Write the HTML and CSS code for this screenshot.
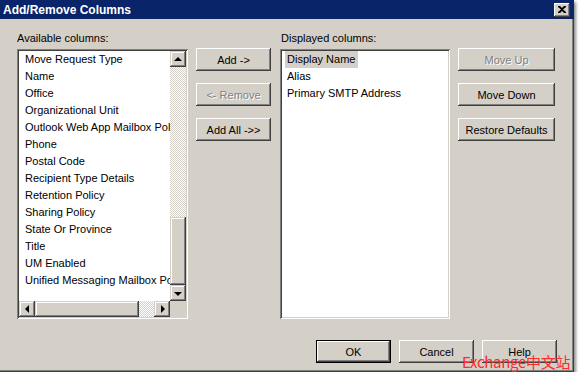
FILE: index.html
```html
<!DOCTYPE html>
<html lang="en">
<head>
    <meta charset="UTF-8">
    <title>Add/Remove Columns</title>
    <link rel="stylesheet" href="styles.css">
</head>
<body>
    <div class="window">
        <div class="titlebar">
            <span class="title">Add/Remove Columns</span>
            <div class="close">
                <svg width="8" height="7" viewBox="0 0 8 7">
                    <path d="M0 0h2l2 2 2-2h2v1L5 3.5 8 6v1H6L4 5 2 7H0V6l3-2.5L0 1z" fill="#000"/>
                </svg>
            </div>
        </div>
        <div class="content">
            <div class="columns">
                <div class="panel left-panel">
                    <div class="label">Available columns:</div>
                    <div class="listbox">
                        <div class="list-main">
                            <ul class="items">
                                <li><span>Move Request Type</span></li>
                                <li><span>Name</span></li>
                                <li><span>Office</span></li>
                                <li><span>Organizational Unit</span></li>
                                <li><span>Outlook Web App Mailbox Policy</span></li>
                                <li><span>Phone</span></li>
                                <li><span>Postal Code</span></li>
                                <li><span>Recipient Type Details</span></li>
                                <li><span>Retention Policy</span></li>
                                <li><span>Sharing Policy</span></li>
                                <li><span>State Or Province</span></li>
                                <li><span>Title</span></li>
                                <li><span>UM Enabled</span></li>
                                <li><span>Unified Messaging Mailbox Policy</span></li>
                            </ul>
                            <div class="vscroll">
                                <div class="sb-btn"><span class="arrow up"></span></div>
                                <div class="track v-track-top"></div>
                                <div class="thumb v-thumb"></div>
                                <div class="sb-btn"><span class="arrow down"></span></div>
                            </div>
                        </div>
                        <div class="hscroll-row">
                            <div class="hscroll">
                                <div class="sb-btn"><span class="arrow left"></span></div>
                                <div class="thumb h-thumb"></div>
                                <div class="track h-track"></div>
                                <div class="sb-btn"><span class="arrow right"></span></div>
                            </div>
                            <div class="corner"></div>
                        </div>
                    </div>
                </div>
                <div class="btn-col mid-col">
                    <button class="btn">Add -&gt;</button>
                    <button class="btn" disabled>&lt;- Remove</button>
                    <button class="btn">Add All -&gt;&gt;</button>
                </div>
                <div class="panel right-panel">
                    <div class="label">Displayed columns:</div>
                    <div class="listbox">
                        <ul class="items">
                            <li class="selected"><span>Display Name</span></li>
                            <li><span>Alias</span></li>
                            <li><span>Primary SMTP Address</span></li>
                        </ul>
                    </div>
                </div>
                <div class="btn-col side-col">
                    <button class="btn" disabled>Move Up</button>
                    <button class="btn">Move Down</button>
                    <button class="btn">Restore Defaults</button>
                </div>
            </div>
            <div class="footer">
                <button class="btn default">OK</button>
                <button class="btn">Cancel</button>
                <button class="btn">Help</button>
            </div>
        </div>
        <div class="watermark">Exchange中文站</div>
    </div>
</body>
</html>
```

FILE: styles.css
```css
body {
    margin: 0;
    background: #fff;
    font-family: "Liberation Sans", Arial, sans-serif;
    font-size: 11px;
    color: #000;
}
.window {
    position: relative;
    width: 574px;
    height: 372px;
    background: #d4d0c8;
    box-shadow: inset -1px -1px #404040, inset -2px -2px #808080, 2px 2px 3px rgba(0, 0, 0, 0.45);
}
.titlebar {
    height: 19px;
    background: #0a246a;
    display: flex;
    align-items: center;
    justify-content: space-between;
    padding: 0 4px 0 3px;
}
.title {
    color: #fff;
    font-weight: bold;
    font-size: 12px;
}
.close {
    width: 16px;
    height: 14px;
    background: #d4d0c8;
    box-shadow: inset -1px -1px #404040, inset 1px 1px #fff, inset -2px -2px #808080;
    display: flex;
    align-items: center;
    justify-content: center;
}
.close svg {
    display: block;
    margin-left: -1px;
}
.content {
    padding: 13px 0 0 17px;
}
.columns {
    display: flex;
    align-items: flex-start;
}
.label {
    height: 13px;
    line-height: 13px;
    margin-bottom: 4px;
}
.right-panel .label {
    padding-left: 1px;
}
.listbox {
    height: 270px;
    padding: 2px;
    box-sizing: border-box;
    background: #fff;
    box-shadow: inset 1px 1px #808080, inset -1px -1px #fff, inset 2px 2px #404040, inset -2px -2px #d4d0c8;
    display: flex;
    flex-direction: column;
}
.left-panel .listbox {
    width: 171px;
}
.right-panel .listbox {
    width: 170px;
}
.list-main {
    display: flex;
    height: 250px;
}
.items {
    list-style: none;
    margin: 0;
    padding: 0;
    flex: 1;
    min-width: 0;
    overflow: hidden;
}
.items li {
    height: 17px;
    line-height: 17px;
    padding-left: 3px;
    white-space: nowrap;
}
.items li span {
    display: inline-block;
    padding: 0 2px;
}
.left-panel .items li span {
    padding-left: 3px;
}
.items li.selected span {
    background: #d4d0c8;
    padding-right: 3px;
}
.vscroll {
    width: 16px;
    display: flex;
    flex-direction: column;
}
.sb-btn, .thumb {
    background: #d4d0c8;
    box-shadow: inset -1px -1px #404040, inset 1px 1px #d4d0c8, inset -2px -2px #808080, inset 2px 2px #fff;
}
.sb-btn {
    width: 16px;
    height: 16px;
    flex: none;
    display: flex;
    align-items: center;
    justify-content: center;
}
.track {
    background: repeating-conic-gradient(#d4d0c8 0 25%, #fff 0 50%) 0 0 / 2px 2px;
}
.v-track-top {
    height: 150px;
}
.v-thumb {
    height: 68px;
}
.hscroll-row {
    display: flex;
    height: 16px;
}
.hscroll {
    display: flex;
    width: 151px;
}
.h-thumb {
    width: 104px;
}
.h-track {
    width: 15px;
}
.corner {
    flex: 1;
    background: #d4d0c8;
}
.arrow {
    width: 0;
    height: 0;
    border: 4px solid transparent;
}
.arrow.up {
    border-bottom-color: #000;
    border-top-width: 0;
    margin-top: -1px;
}
.arrow.down {
    border-top-color: #000;
    border-bottom-width: 0;
    margin-top: 1px;
}
.arrow.left {
    border-right-color: #000;
    border-left-width: 0;
    margin-left: -1px;
}
.arrow.right {
    border-left-color: #000;
    border-right-width: 0;
    margin-left: 1px;
}
.btn-col {
    display: flex;
    flex-direction: column;
    gap: 12px;
    padding-top: 16px;
}
.mid-col {
    width: 75px;
    margin: 0 9px 0 8px;
}
.side-col {
    width: 97px;
    margin-left: 8px;
}
.btn {
    height: 23px;
    padding: 0;
    border: none;
    background: #d4d0c8;
    font-family: "Liberation Sans", Arial, sans-serif;
    font-size: 11px;
    color: #000;
    box-shadow: inset -1px -1px #404040, inset 1px 1px #fff, inset -2px -2px #808080, inset 2px 2px #d4d0c8;
}
.btn:disabled {
    color: #808080;
    text-shadow: 1px 1px #fff;
}
.btn.default {
    box-shadow: inset 0 0 0 1px #000, inset -2px -2px #404040, inset 2px 2px #fff, inset -3px -3px #808080;
}
.footer {
    display: flex;
    gap: 8px;
    padding-left: 299px;
    margin-top: 21px;
}
.footer .btn {
    width: 75px;
}
.watermark {
    position: absolute;
    left: 462px;
    top: 352px;
    color: #ff2a2a;
    font-family: "Noto Sans CJK SC", sans-serif;
    font-size: 15px;
    line-height: 20px;
    letter-spacing: -0.3px;
    white-space: nowrap;
}
```
